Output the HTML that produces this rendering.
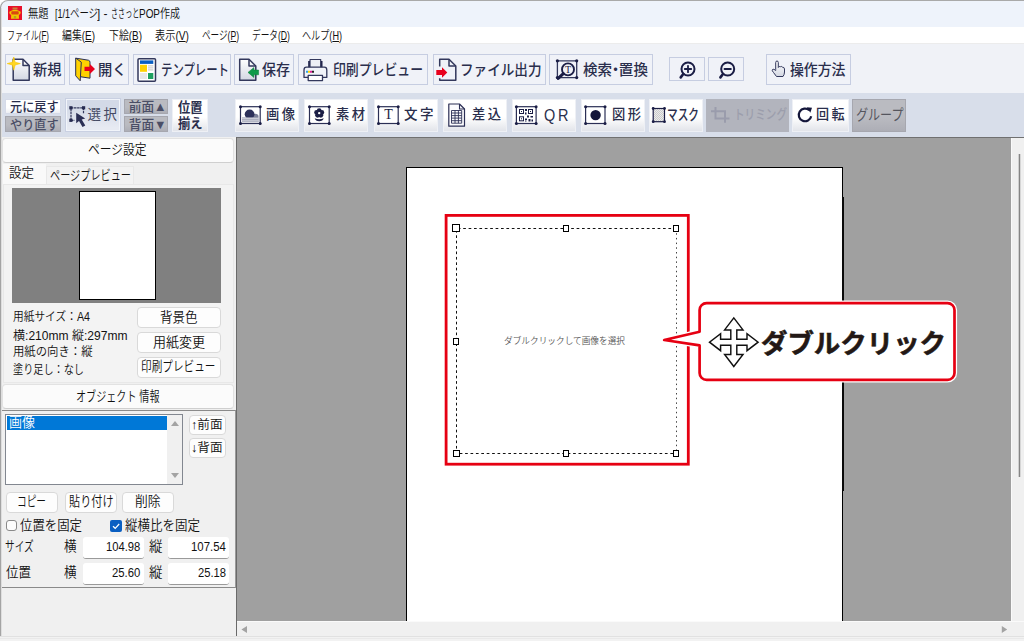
<!DOCTYPE html>
<html lang="ja"><head><meta charset="utf-8"><title>ささっとPOP作成</title>
<style>
*{box-sizing:border-box;margin:0;padding:0}
html,body{width:1024px;height:641px;overflow:hidden;background:#f0f0f0}
body{font-family:"Liberation Sans","Noto Sans CJK JP",sans-serif;font-size:12px;color:#000;position:relative;line-height:1}
.a{position:absolute}
.t{position:absolute;white-space:nowrap;line-height:1;transform-origin:0 50%;display:block;font-weight:350;color:#111}
#title{left:0;top:0;width:1030px;height:27px;background:#eef3fb;border-top:1px solid #a9a9a9;border-left:1px solid #9c9c9c;border-top-left-radius:8px}
#menu{left:0;top:27px;width:1024px;height:17px;background:#fff;border-bottom:1px solid #ececec}
#tb1{left:0;top:44px;width:1024px;height:49px;background:#f0f2f7}
#tb2{left:0;top:93px;width:1024px;height:44px;background:#d8deea}
.b1{position:absolute;top:54px;height:31px;background:#f0f2f8;border:1px solid #c6cde1}
.b2{position:absolute;top:99px;height:33px;background:linear-gradient(#fff 55%,#e2e4ea);border:1px solid #eef0f5}
.sb{position:absolute;left:5px;width:56px;height:15px;background:#fff}
.b2g{background:linear-gradient(#babbc1 55%,#adaeb6);border:1px solid #a6a7af}
.k{color:#2a2e4c;font-weight:500}
.k2{color:#2a2e4c;font-weight:500;letter-spacing:2.5px}
#left{left:0;top:137px;width:236px;height:500px;background:#f0f0f0}
#canvas{left:236px;top:137px;width:775px;height:484px;background:#a0a0a0;overflow:hidden}
.hd{position:absolute;left:2px;width:232px;height:25px;background:#fbfbfb;border:1px solid #e2e2e2;border-bottom-color:#cfcfcf;border-radius:4px}
.pb{position:absolute;background:#fdfdfd;border:1px solid #d9d9d9;border-radius:4px}
.in{position:absolute;width:61px;height:22px;background:#fff;border-bottom:1px solid #9a9a9a;border-radius:3px}
</style></head><body>
<!--TITLE-->
<div class="a" style="left:0;top:0;width:10px;height:10px;background:#fff"></div>
<div class="a" id="title"></div>
<svg class="a" style="left:8px;top:6px" width="14" height="14" viewBox="0 0 14 14"><rect width="14" height="14" fill="#e8102a"/><path d="M4.300 4.200Q7 3.300 9.700 4.200L12.600 5.800Q13.200 7.500 11.500 8.600L10.800 9.200 11 12.800H3L3.200 9.200 2.500 8.600Q.8 7.500 1.400 5.800Z" fill="#f2c500"/><rect x="3.300" y="5.200" width="7.400" height="3.300" rx=".8" fill="#d9480f"/><path d="M4.500 1.500H9.500V3.600H4.500Z" fill="#c9803a"/><path d="M5.800 10H8.200V12.800H5.800Z" fill="#b8a020"/></svg>
<span class="t" style="left:27.5px;top:8px;font-size:12px;transform:scaleX(0.8536);">無題</span>
<span class="t" style="left:55px;top:8px;font-size:12px;transform:scaleX(0.7494);">[1/1</span>
<span class="t" style="left:69.5px;top:8px;font-size:12px;transform:scaleX(0.7829);">ページ</span>
<span class="t" style="left:97.3px;top:8px;font-size:12px;transform:scaleX(0.9570);">]</span>
<span class="t" style="left:103.5px;top:8px;font-size:12px;">-</span>
<span class="t" style="left:110.5px;top:8px;font-size:12px;transform:scaleX(0.5936);">ささっと</span>
<span class="t" style="left:139.3px;top:8px;font-size:12px;transform:scaleX(0.8286);">POP</span>
<span class="t" style="left:160.3px;top:8px;font-size:12px;transform:scaleX(0.8328);">作成</span>
<!--MENU-->
<div class="a" id="menu"></div>
<span class="t" style="left:7px;top:30px;font-size:12px;transform:scaleX(0.6630);">ファイル(<u>F</u>)</span>
<span class="t" style="left:62px;top:30px;font-size:12px;transform:scaleX(0.8247);">編集(<u>E</u>)</span>
<span class="t" style="left:109px;top:30px;font-size:12px;transform:scaleX(0.8247);">下絵(<u>B</u>)</span>
<span class="t" style="left:155px;top:30px;font-size:12px;transform:scaleX(0.8497);">表示(<u>V</u>)</span>
<span class="t" style="left:202px;top:30px;font-size:12px;transform:scaleX(0.7145);">ページ(<u>P</u>)</span>
<span class="t" style="left:251.5px;top:30px;font-size:12px;transform:scaleX(0.7214);">データ(<u>D</u>)</span>
<span class="t" style="left:302px;top:30px;font-size:12px;transform:scaleX(0.7594);">ヘルプ(<u>H</u>)</span>
<!--TB1-->
<div class="a" id="tb1"></div>
<div class="b1" style="left:5px;width:60px"></div>
<div class="b1" style="left:69px;width:60px"></div>
<div class="b1" style="left:133px;width:98px"></div>
<div class="b1" style="left:234px;width:60px"></div>
<div class="b1" style="left:298px;width:130px"></div>
<div class="b1" style="left:433px;width:113px"></div>
<div class="b1" style="left:549px;width:104px"></div>
<div class="b1" style="left:669px;width:36px;top:57px;height:24px"></div>
<div class="b1" style="left:708px;width:36px;top:57px;height:24px"></div>
<div class="b1" style="left:766px;width:85px"></div>
<span class="t k" style="left:32.5px;top:62.665px;font-size:14.67px;transform:scaleX(0.9718);">新規</span>
<span class="t k" style="left:97.5px;top:62.665px;font-size:14.67px;transform:scaleX(0.9718);">開く</span>
<span class="t k" style="left:160.75px;top:62.665px;font-size:14.67px;transform:scaleX(0.7771);">テンプレート</span>
<span class="t k" style="left:262px;top:62.665px;font-size:14.67px;transform:scaleX(0.9547);">保存</span>
<span class="t k" style="left:333px;top:62.665px;font-size:14.67px;transform:scaleX(0.8771);">印刷プレビュー</span>
<span class="t k" style="left:459.5px;top:62.665px;font-size:14.67px;transform:scaleX(0.9266);">ファイル出力</span>
<span class="t k" style="left:583px;top:62.665px;font-size:14.67px;transform:scaleX(0.9936);">検索<span style="margin:0 -.27em">・</span>置換</span>
<span class="t k" style="left:790px;top:62.665px;font-size:14.67px;transform:scaleX(0.9464);">操作方法</span>
<!--TB2-->
<div class="a" id="tb2"></div>
<div class="sb" style="top:99px;border:1px solid #d5dae8;background:linear-gradient(#fff 60%,#eceef3)"></div>
<div class="sb b2g" style="top:116px;height:16px"></div>
<div class="b2" style="left:65px;top:98px;width:56px;height:34px;background:linear-gradient(#d3d9e7 25%,#e7eaf2 90%);border:1px solid #c9d0e2;box-shadow:inset 0 0 0 1px #f1f4fa"></div>
<div class="sb b2g" style="top:99px;left:124px;width:44px"></div>
<div class="sb b2g" style="top:116px;height:16px;left:124px;width:44px"></div>
<div class="b2" style="left:172px;width:36px"></div>
<div class="b2" style="left:235px;width:64px"></div>
<div class="b2" style="left:304px;width:64px"></div>
<div class="b2" style="left:374px;width:64px"></div>
<div class="b2" style="left:443px;width:64px"></div>
<div class="b2" style="left:512px;width:64px"></div>
<div class="b2" style="left:581px;width:64px"></div>
<div class="b2" style="left:649px;width:54px"></div>
<div class="b2 b2g" style="left:706px;width:83px;background:#b2b4bd;border-color:#b2b4bd"></div>
<div class="b2" style="left:792px;width:57px"></div>
<div class="b2 b2g" style="left:852px;width:54px"></div>
<span class="t k" style="left:9.5px;top:100.65px;font-size:12.7px;transform:scaleX(0.9557);">元に戻す</span>
<span class="t k" style="left:9.5px;top:118.65px;font-size:12.7px;transform:scaleX(0.9557);color:#4a4e66">やり直す</span>
<span class="t k2" style="left:87.5px;top:108.45px;font-size:13.5px;color:#444963;font-weight:400">選択</span>
<span class="t k" style="left:128.75px;top:100.65px;font-size:12.7px;color:#4a4e66">前面▲</span>
<span class="t k" style="left:128.75px;top:118.65px;font-size:12.7px;color:#4a4e66">背面▼</span>
<span class="t k" style="left:177.8px;top:100.85px;font-size:13.3px;transform:scaleX(0.9213);font-weight:700">位置</span>
<span class="t k" style="left:177.8px;top:116.65px;font-size:13.3px;transform:scaleX(0.9213);font-weight:700">揃え</span>
<span class="t k2" style="left:266px;top:108.45px;font-size:13.5px;transform:scaleX(0.9844);">画像</span>
<span class="t k2" style="left:335.5px;top:108.45px;font-size:13.5px;transform:scaleX(0.9844);">素材</span>
<span class="t k2" style="left:404px;top:108.45px;font-size:13.5px;">文字</span>
<span class="t k2" style="left:472px;top:108.45px;font-size:13.5px;transform:scaleX(0.9844);">差込</span>
<span class="t k" style="left:544px;top:106.65px;font-size:16.3px;transform:scaleX(0.8875);letter-spacing:3px;font-weight:400">QR</span>
<span class="t k2" style="left:612px;top:108.45px;font-size:13.5px;transform:scaleX(0.9844);">図形</span>
<span class="t k" style="left:667px;top:107.665px;font-size:14.67px;transform:scaleX(0.7275);">マスク</span>
<span class="t k" style="left:734px;top:108.35px;font-size:13.3px;transform:scaleX(0.7972);color:#9c9eac">トリミング</span>
<span class="t k2" style="left:815.5px;top:108.45px;font-size:13.5px;transform:scaleX(0.9688);">回転</span>
<span class="t k" style="left:855.5px;top:107.665px;font-size:14.67px;transform:scaleX(0.8225);color:#55565e;font-weight:400">グループ</span>
<svg class="a" style="left:0;top:44px" width="1024" height="93" viewBox="0 44 1024 93">
<defs><linearGradient id="pg" x1="0" y1="0" x2="0" y2="1"><stop offset="0" stop-color="#fff"/><stop offset="1" stop-color="#d3d7e2"/></linearGradient></defs>
<g fill="none" stroke="#33385c" stroke-width="1.5" stroke-linejoin="round">
<!-- new -->
<path d="M13.2 59.300H23L29.200 65.500V80.200H13.200Z" fill="url(#pg)"/><path d="M23 59.300V65.500H29.200"/>
<path d="M13.750 57 15.100 62.200 20.300 63.600 15.100 65 13.750 70.200 12.400 65 7.200 63.600 12.400 62.200Z" fill="#ffd622" stroke="#f7c400" stroke-width=".6"/>
<!-- open -->
<path d="M76 58.200 88.400 60.200Q90 60.600 90 62.200V78.200L80.800 76.800Z" fill="#ffd200" stroke="#2a2f55" stroke-width="1"/>
<path d="M75.700 58 81.300 62.200 80.200 80.800 75.700 75.800Z" fill="#ffd200" stroke="#2a2f55" stroke-width="1"/>
<path d="M84.500 66.700H89.900V64L95 68.900 89.900 73.900V71.100H84.500Z" fill="#e8001c" stroke="none"/>
<!-- template -->
<rect x="138" y="58.700" width="17.500" height="22.500" rx="1" fill="#fff"/>
<rect x="140" y="60.400" width="13.300" height="3.500" fill="#0a5fc2" stroke="none"/>
<rect x="140" y="64.800" width="7" height="7" fill="#ffd200" stroke="none"/>
<rect x="148" y="73" width="5.300" height="6" fill="#1fa060" stroke="none"/>
<path d="M148 65.800H153.300M148 67.800H153.300M148 69.800H153.300M140 74H147M140 76H147M140 78H147" stroke="#cfcfcf" stroke-width="1.200"/>
<!-- save -->
<path d="M239.700 59.200H249L255.800 66V80.200H239.700Z" fill="url(#pg)"/><path d="M249 59.200V66H255.800"/>
<path d="M248 72.400 253.900 67.500V70H258.600V74.800H253.900V77.500Z" fill="#0f9a4a" stroke="#0a7a38" stroke-width=".5"/>
<!-- printer -->
<rect x="308.200" y="61" width="14.300" height="7" fill="#1a1d45" stroke="none"/>
<rect x="310" y="59.500" width="10.700" height="9" fill="#eef0f5" stroke-width="1.200"/>
<path d="M306.500 67.200H324.300Q326.800 67.200 326.800 70V77.400H304V70Q304 67.200 306.500 67.200Z" fill="#f1f3f8" stroke-width="1.300"/>
<rect x="308.200" y="75.400" width="14.300" height="5.200" fill="#fff" stroke-width="1.300"/>
<path d="M306 71.800H308" stroke="#2aa5e8" stroke-width="2"/><path d="M308 71.800H310" stroke="#ffd200" stroke-width="2"/><path d="M310 71.800H312" stroke="#e0249a" stroke-width="2"/><path d="M312 71.800H314" stroke="#222" stroke-width="2"/>
<!-- file out -->
<path d="M439.700 66.500V59.200H449L455.800 66V80.200H439.700V78.300"/><path d="M449 59.200V66H455.800"/>
<path d="M436.300 70H442V67.200L447.300 72.500 442 77.700V75H436.300Z" fill="#e8001c" stroke="none"/>
<!-- search -->
<rect x="557.400" y="60.800" width="19.300" height="16.800" stroke-width="1.300"/>
<g fill="#1a1d45" stroke="none"><circle cx="557.400" cy="60.800" r="1.600"/><circle cx="576.700" cy="60.800" r="1.600"/><circle cx="576.700" cy="77.600" r="1.600"/><circle cx="557.400" cy="77.600" r="1.600"/></g>
<circle cx="568" cy="69.400" r="6" fill="#f0f2f7" stroke="#1a1d45" stroke-width="1.900"/>
<path d="M563.300 73.600 558.200 78.400" stroke="#1a1d45" stroke-width="3" stroke-linecap="round"/>
<!-- zoom in/out -->
<g stroke="#1a1d45" stroke-width="2" stroke-linecap="round">
<circle cx="688" cy="69" r="6.500"/><path d="M683.300 74 680.700 77.400" stroke-width="2.600"/><path d="M684.800 69H691.200M688 65.800V72.200" stroke-width="1.800"/>
<circle cx="727.700" cy="69" r="6.500"/><path d="M723 74 720.400 77.400" stroke-width="2.600"/><path d="M724.500 69H730.900" stroke-width="1.800"/>
</g>
<!-- hand -->
<path d="M775.700 69.500V62.500Q775.700 61 777 61Q778.300 61 778.300 62.500V67.500Q779 66 780.500 66.700Q781 65.800 782.500 67.200Q784.300 67 784.500 69V72Q784.500 74.500 783 76.500H776.500Q775 74.500 773.500 72.500Q771.500 70.500 772.500 69.500Q773.700 68.500 775.700 70.500Z" fill="url(#pg)" stroke-width="1"/>
</g>
<text x="568" y="73" font-size="10" font-family="Liberation Serif,serif" text-anchor="middle" fill="#1a1d45">T</text>
<pattern id="ck" width="2" height="2" patternUnits="userSpaceOnUse"><rect width="2" height="2" fill="#ececec"/><rect width="1" height="1" fill="#cbcbcb"/><rect x="1" y="1" width="1" height="1" fill="#cbcbcb"/></pattern>
<!-- select -->
<path d="M71 120.300V107.800H83.500V113.500M71 120.300H74.500" fill="none" stroke="#33385c" stroke-width="1.200" stroke-dasharray="2.500 .6"/>
<g fill="#262a50"><rect x="69.300" y="106.200" width="3.200" height="3.200"/><rect x="82" y="106.200" width="3.200" height="3.200"/><rect x="69.300" y="118.700" width="3.200" height="3.200"/></g>
<path d="M76.200 112.800V123.200L79 120.900 82.500 127.100 85.300 125.500 81.700 119.500 85.200 118.600Z" fill="#2b2f55"/>
<!-- image -->
<rect x="240.5" y="106.7" width="19.7" height="16.8" fill="#fff" stroke="#2b2f55" stroke-width="1.200"/><g fill="#1a1d45"><circle cx="240.5" cy="106.7" r="1.500"/><circle cx="240.5" cy="123.5" r="1.500"/><circle cx="260.2" cy="106.7" r="1.500"/><circle cx="260.2" cy="123.5" r="1.500"/></g>
<ellipse cx="255.300" cy="116.300" rx="3.200" ry="2.600" fill="#7b7f98"/>
<ellipse cx="249.600" cy="114.200" rx="4.900" ry="4.700" fill="#2d315a"/>
<rect x="242" y="117.300" width="16.800" height="5" fill="#a9acbc"/>
<path d="M242 118.600H258.800M242 120.800H258.800" stroke="#d5d7e0" stroke-width=".8"/>
<!-- material -->
<rect x="309.5" y="106.7" width="19.7" height="16.8" fill="#fff" stroke="#2b2f55" stroke-width="1.200"/><g fill="#1a1d45"><circle cx="309.5" cy="106.7" r="1.500"/><circle cx="309.5" cy="123.5" r="1.500"/><circle cx="329.2" cy="106.7" r="1.500"/><circle cx="329.2" cy="123.5" r="1.500"/></g>
<g fill="#1a1d45"><circle cx="319.200" cy="110.700" r="2.400"/><circle cx="316.600" cy="112.500" r="2.400"/><circle cx="321.800" cy="112.500" r="2.400"/><circle cx="317.600" cy="115.300" r="2.400"/><circle cx="320.800" cy="115.300" r="2.400"/>
<path d="M314.700 118.300Q319.200 120.300 323.700 118.300A4.600 3.600 0 0 1 314.700 118.300Z"/></g>
<circle cx="319.200" cy="113.100" r="1.200" fill="#fff"/>
<!-- text -->
<rect x="378.5" y="106.7" width="19.7" height="16.8" fill="#fff" stroke="#2b2f55" stroke-width="1.200"/><g fill="#1a1d45"><circle cx="378.5" cy="106.7" r="1.500"/><circle cx="378.5" cy="123.5" r="1.500"/><circle cx="398.2" cy="106.7" r="1.500"/><circle cx="398.2" cy="123.5" r="1.500"/></g>
<text x="388.600" y="119.400" font-size="14" font-family="Liberation Serif,serif" text-anchor="middle" fill="#1a1d45">T</text>
<!-- merge -->
<path d="M448.800 104H459.500L464.500 109V126.200H448.800Z" fill="#fcfcfe" stroke="#2b2f55" stroke-width="1.200" stroke-linejoin="round"/>
<path d="M459.500 104V109H464.500" fill="none" stroke="#2b2f55" stroke-width="1.100"/>
<path d="M451.500 110.500H461.700V123.200H451.500ZM451.500 113H461.700M451.500 115.600H461.700M451.500 118.100H461.700M451.500 120.700H461.700M455 110.500V123.200M458.400 110.500V123.200" fill="none" stroke="#2b2f55" stroke-width=".9"/>
<!-- qr -->
<rect x="516.4" y="106.7" width="19.7" height="16.8" fill="#fff" stroke="#2b2f55" stroke-width="1.200"/><g fill="#1a1d45"><circle cx="516.4" cy="106.7" r="1.500"/><circle cx="516.4" cy="123.5" r="1.500"/><circle cx="536.1" cy="106.7" r="1.500"/><circle cx="536.1" cy="123.5" r="1.500"/></g>
<g fill="none" stroke="#1a1d45" stroke-width="1"><rect x="519.500" y="109.500" width="4" height="4"/><rect x="528.500" y="109.500" width="4" height="4"/><rect x="519.500" y="116.800" width="4" height="4"/></g>
<g fill="#1a1d45"><rect x="521" y="111" width="1" height="1"/><rect x="530" y="111" width="1" height="1"/><rect x="521" y="118.300" width="1" height="1"/>
<rect x="525" y="109" width="2" height="2"/><rect x="525" y="112.500" width="1.500" height="2"/><rect x="527" y="115.500" width="2" height="2"/><rect x="530.500" y="116" width="2.500" height="1.500"/><rect x="525" y="118.500" width="2" height="1.500"/><rect x="528.500" y="119" width="2" height="2.500"/><rect x="531.500" y="119.500" width="1.500" height="2"/><rect x="525" y="120.500" width="1.500" height="1"/></g>
<!-- shape -->
<rect x="585.6" y="106.7" width="19.4" height="16.8" fill="#fff" stroke="#2b2f55" stroke-width="1.200"/><g fill="#1a1d45"><circle cx="585.6" cy="106.7" r="1.500"/><circle cx="585.6" cy="123.5" r="1.500"/><circle cx="605" cy="106.7" r="1.500"/><circle cx="605" cy="123.5" r="1.500"/></g>
<circle cx="595.600" cy="115.100" r="5.200" fill="#14163a"/>
<!-- mask -->
<rect x="653.200" y="108.500" width="11.300" height="13.200" fill="url(#ck)" stroke="#1a1d45" stroke-width="1.200"/>
<g fill="#1a1d45"><circle cx="653.200" cy="108.500" r="1.400"/><circle cx="664.500" cy="108.500" r="1.400"/><circle cx="653.200" cy="121.700" r="1.400"/><circle cx="664.500" cy="121.700" r="1.400"/></g>
<!-- trim -->
<path d="M715.500 107V118.500H729.500M711 111.200H725V122.800" fill="none" stroke="#9a9cac" stroke-width="2"/>
<!-- rotate -->
<path d="M809.300 110.300A6.300 6.300 0 1 0 811.200 116.200" fill="none" stroke="#14163a" stroke-width="2.200"/>
<path d="M806.800 107.300 812 107.800 810.300 112.800Z" fill="#14163a"/>

</svg>
<!--LEFT-->
<div class="a" id="left"></div>
<div class="hd" style="top:138px"></div>
<div class="a" style="left:3px;top:164px;width:43px;height:21px;background:#f9f9f9"></div>
<span class="t" style="left:87.5px;top:143.15px;font-size:13.3px;transform:scaleX(0.8834);">ページ設定</span>
<div class="a" style="left:3px;top:184px;width:231px;height:199px;background:#f3f3f3;border:1px solid #e8e8e8"></div>
<div class="a" style="left:46px;top:166px;width:88px;height:18px;background:#f3f3f3;border:1px solid #e8e8e8;border-bottom:none"></div>
<span class="t" style="left:8.75px;top:167.4px;font-size:12.8px;transform:scaleX(0.9768);">設定</span>
<span class="t" style="left:49.5px;top:168.95px;font-size:13.3px;transform:scaleX(0.7634);">ページプレビュー</span>
<div class="a" style="left:12px;top:188px;width:209px;height:115px;background:#808080"></div>
<div class="a" style="left:79px;top:191px;width:77px;height:109px;background:#fff;border:1px solid #000"></div>
<span class="t" style="left:13px;top:311px;font-size:12px;transform:scaleX(0.8919);">用紙サイズ：A4</span>
<span class="t" style="left:13px;top:329.5px;font-size:12px;transform:scaleX(1.0041);">横:210mm 縦:297mm</span>
<span class="t" style="left:13px;top:346px;font-size:12px;transform:scaleX(0.9463);">用紙の向き：縦</span>
<span class="t" style="left:13px;top:364px;font-size:12px;transform:scaleX(0.8451);">塗り足し：なし</span>
<div class="pb" style="left:137px;top:307px;width:84px;height:21px"></div>
<div class="pb" style="left:137px;top:332px;width:84px;height:21px"></div>
<div class="pb" style="left:137px;top:357px;width:84px;height:21px"></div>
<span class="t" style="left:160px;top:310.85px;font-size:13.3px;transform:scaleX(0.9401);">背景色</span>
<span class="t" style="left:153px;top:335.85px;font-size:13.3px;transform:scaleX(0.9777);">用紙変更</span>
<span class="t" style="left:141px;top:360.35px;font-size:13.3px;transform:scaleX(0.8004);">印刷プレビュー</span>
<div class="hd" style="top:384px"></div>
<span class="t" style="left:75.5px;top:389.85px;font-size:13.3px;transform:scaleX(0.7586);">オブジェクト 情報</span>
<div class="a" style="left:1px;top:410px;width:235px;height:178px;border:1px solid #8a8a8a;border-right-color:#9a9a9a;border-left-color:#b0b0b0"></div>
<div class="a" style="left:5px;top:414px;width:178px;height:71px;background:#fff;border:1px solid #828790"></div>
<div class="a" style="left:7px;top:416px;width:160px;height:14px;background:#0078d7"></div>
<div class="a" style="left:167px;top:415px;width:15px;height:69px;background:#f0f0f0"></div>
<div class="a" style="left:171px;top:421px;border:4px solid transparent;border-top:none;border-bottom:5px solid #a3a3a3"></div>
<div class="a" style="left:171px;top:473px;border:4px solid transparent;border-bottom:none;border-top:5px solid #a3a3a3"></div>
<span class="t" style="left:8.75px;top:416.35px;font-size:13.3px;transform:scaleX(0.9777);color:#fff">画像</span>
<div class="pb" style="left:189px;top:415px;width:37px;height:20px"></div>
<div class="pb" style="left:189px;top:438px;width:37px;height:20px"></div>
<span class="t" style="left:190.5px;top:418.55px;font-size:12.5px;transform:scaleX(1.0075);">↑前面</span>
<span class="t" style="left:190.5px;top:441.55px;font-size:12.5px;transform:scaleX(1.0075);">↓背面</span>
<div class="pb" style="left:6px;top:492px;width:52px;height:21px"></div>
<div class="pb" style="left:65px;top:492px;width:52px;height:21px"></div>
<div class="pb" style="left:122px;top:492px;width:52px;height:21px"></div>
<span class="t" style="left:17px;top:495.35px;font-size:13.3px;transform:scaleX(0.7270);">コピー</span>
<span class="t" style="left:68.75px;top:495.35px;font-size:13.3px;transform:scaleX(0.8367);">貼り付け</span>
<span class="t" style="left:135px;top:495.35px;font-size:13.3px;transform:scaleX(0.9589);">削除</span>
<div class="a" style="left:6px;top:520px;width:11px;height:11px;background:#fdfdfd;border:1px solid #8a8a8a;border-radius:3px"></div>
<div class="a" style="left:110px;top:520px;width:12px;height:12px;background:#0a5fc2;border-radius:2px"></div>
<svg class="a" style="left:110px;top:520px" width="12" height="12" viewBox="0 0 12 12"><path d="M3 6.2 5.2 8.3 9.2 4" fill="none" stroke="#fff" stroke-width="1.2"/></svg>
<span class="t" style="left:20px;top:519.35px;font-size:13.3px;transform:scaleX(0.9325);">位置を固定</span>
<span class="t" style="left:125px;top:519.35px;font-size:13.3px;transform:scaleX(0.9401);">縦横比を固定</span>
<span class="t" style="left:5.4px;top:540.35px;font-size:13.3px;transform:scaleX(0.7241);">サイズ</span>
<span class="t" style="left:64px;top:540.35px;font-size:13.3px;transform:scaleX(0.9476);">横</span>
<span class="t" style="left:149px;top:540.35px;font-size:13.3px;transform:scaleX(1.0078);">縦</span>
<span class="t" style="left:6px;top:566.35px;font-size:13.3px;transform:scaleX(0.9401);">位置</span>
<span class="t" style="left:64px;top:566.35px;font-size:13.3px;transform:scaleX(0.9476);">横</span>
<span class="t" style="left:149px;top:566.35px;font-size:13.3px;transform:scaleX(1.0078);">縦</span>
<div class="in" style="left:83px;top:537px"></div>
<div class="in" style="left:168px;top:537px"></div>
<div class="in" style="left:83px;top:563px"></div>
<div class="in" style="left:168px;top:563px"></div>
<span class="t" style="left:106.4px;top:541px;font-size:12px;transform:scaleX(0.9345);">104.98</span>
<span class="t" style="left:190.8px;top:541px;font-size:12px;transform:scaleX(0.9481);">107.54</span>
<span class="t" style="left:112.4px;top:567px;font-size:12px;transform:scaleX(0.9424);">25.60</span>
<span class="t" style="left:197.6px;top:567px;font-size:12px;transform:scaleX(0.9324);">25.18</span>
<!--CANVAS-->
<div class="a" id="canvas"></div>
<div class="a" style="left:236px;top:137px;width:788px;height:1px;background:#707070"></div>
<div class="a" style="left:236px;top:137px;width:1px;height:499px;background:#6a6a6a"></div>
<div class="a" style="left:406px;top:167px;width:437px;height:460px;background:#fff;border:1px solid #000"></div>
<div class="a" style="left:842px;top:197px;width:2px;height:294px;background:#0a0a0a"></div>
<svg class="a" style="left:236px;top:137px" width="775" height="484" viewBox="236 137 775 484">
<rect x="446.100" y="215.400" width="242.200" height="248.800" fill="none" stroke="#e60012" stroke-width="2.800"/>
<path d="M676.500 228.500H456.500V453.500H676.500" fill="none" stroke="#111" stroke-width="1" stroke-dasharray="2.700 2.700"/><path d="M676.500 228.500V453.500" fill="none" stroke="#444" stroke-width="1" stroke-dasharray="1.500 3.200"/>
<g shape-rendering="crispEdges" fill="none" stroke="#000" stroke-width="1">
<g fill="#fff">
<rect x="452.500" y="224.500" width="7" height="7"/>
<rect x="563.500" y="225.500" width="5" height="6"/>
<rect x="673.500" y="225.500" width="5" height="6"/>
<rect x="453.500" y="338.500" width="5" height="6"/>
<rect x="453.500" y="450.500" width="6" height="6"/>
<rect x="563.500" y="450.500" width="5" height="6"/>
<rect x="673.500" y="450.500" width="5" height="6"/>
</g></g>
<path d="M706.600 303.100H947.500a7 7 0 0 1 7 7V372.900a7 7 0 0 1 -7 7H706.600a7 7 0 0 1 -7 -7V345.400L664.200 340 699.600 331.700V310.100a7 7 0 0 1 7 -7Z" fill="#fff" stroke="#fff" stroke-width="5.200" stroke-linejoin="round"/>
<path d="M706.600 303.100H947.500a7 7 0 0 1 7 7V372.900a7 7 0 0 1 -7 7H706.600a7 7 0 0 1 -7 -7V345.400L664.200 340 699.600 331.700V310.100a7 7 0 0 1 7 -7Z" fill="#fff" stroke="#e60012" stroke-width="2.700" stroke-linejoin="round"/>
<path transform="translate(733.800 342.200)" d="M0-24.300 9.200-12.300H3V-3H13.200V-8.500L24.300 0 13.200 8.500V3H3V12.300H9.200L0 24.300-9.200 12.300H-3V3H-13.200V8.500L-24.300 0-13.200-8.500V-3H-3V-12.300H-9.200Z" fill="#fff" stroke="#111" stroke-width="1.450" stroke-linejoin="miter"/>
</svg>
<span class="t" style="left:760.5px;top:330.5px;font-size:26px;transform:scaleX(1.0164);font-weight:700;color:#231815;-webkit-text-stroke:.6px #231815">ダブルクリック</span>
<span class="t" style="left:503.5px;top:336.5px;font-size:9px;transform:scaleX(0.9623);color:#555">ダブルクリックして画像を選択</span>
<!--SCROLLBARS-->
<div class="a" style="left:0;top:8px;width:2px;height:633px;background:#dedede;border-left:1px solid #a4a4a4"></div>
<div class="a" style="left:1011px;top:138px;width:13px;height:499px;background:#f0f0f0;border-left:1px solid #fafafa"></div>
<div class="a" style="left:1019px;top:154px;width:1px;height:323px;background:#858585;box-shadow:-1px 0 #cfcfcf,1px 0 #d6d6d6"></div>
<div class="a" style="left:237px;top:621px;width:787px;height:16px;background:#f0f0f0;border-top:1px solid #fafafa"></div>
<svg class="a" style="left:237px;top:621px" width="787" height="16" viewBox="237 621 787 16"><path d="M241.400 629.500 247 626V633ZM1007.200 629.500 1001.800 626V633Z" fill="#a3a3a3"/></svg>
<div class="a" style="left:0;top:636px;width:1024px;height:5px;background:#f2f2f2;border-top:1px solid #e1e1e1"></div>
<div class="a" style="left:0;top:638px;width:1024px;height:1px;background:#e9e9e9"></div>
</body></html>
